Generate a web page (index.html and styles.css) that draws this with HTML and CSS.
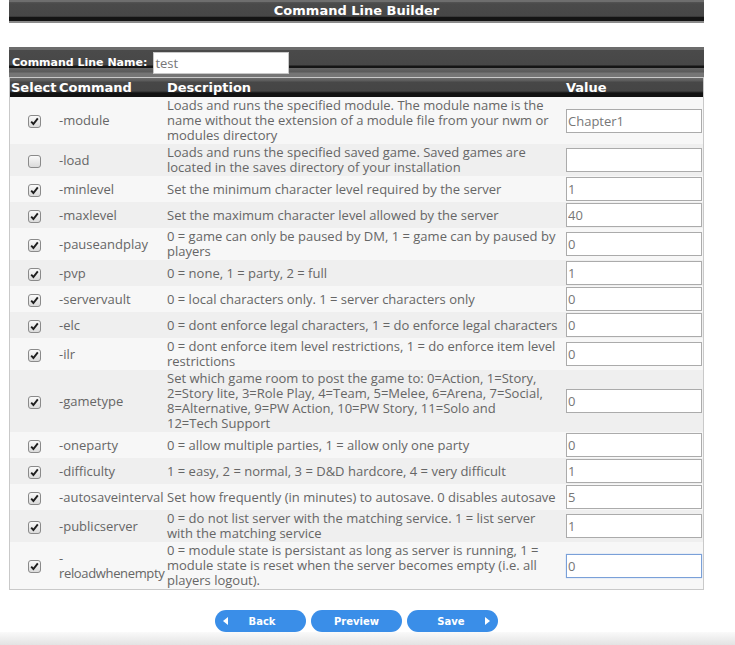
FILE: index.html
```html
<!DOCTYPE html>
<html>
<head>
<meta charset="utf-8">
<title>Command Line Builder</title>
<link rel="stylesheet" href="styles.css">
</head>
<body>
<div class="page">
  <div class="titlebar">Command Line Builder</div>
  <div class="namebar">
    <span class="namelabel">Command Line Name:</span>
    <input class="nameinput" type="text" value="test">
  </div>
  <div class="tablebox">
    <table class="grid">
      <colgroup>
        <col class="c-sel"><col class="c-cmd"><col class="c-desc"><col class="c-val">
      </colgroup>
      <thead>
        <tr><th class="h-sel">Select</th><th class="h-cmd">Command</th><th class="h-desc">Description</th><th class="h-val">Value</th></tr>
      </thead>
      <tbody>
        <tr><td class="sel"><span class="cb"><svg viewBox="0 0 13 13" width="13" height="13"><defs><linearGradient id="g" x1="0" y1="0" x2="0" y2="1"><stop offset="0" stop-color="#fbfbfb"/><stop offset="1" stop-color="#d9d9d9"/></linearGradient></defs><rect x="0.5" y="0.5" width="12" height="12" rx="2.5" fill="url(#g)" stroke="#8a8a8a"/><path d="M3.2 6.6 L5.4 9 L9.8 3.4" fill="none" stroke="#1e1e1e" stroke-width="1.9"/></svg></span></td><td class="cmd">-module</td><td class="desc">Loads and runs the specified module. The module name is the name without the extension of a module file from your nwm or modules directory</td><td class="val"><input type="text" value="Chapter1"></td></tr>
        <tr><td class="sel"><span class="cb"><svg viewBox="0 0 13 13" width="13" height="13"><rect x="0.5" y="0.5" width="12" height="12" rx="2.5" fill="url(#g)" stroke="#8a8a8a"/></svg></span></td><td class="cmd">-load</td><td class="desc">Loads and runs the specified saved game. Saved games are located in the saves directory of your installation</td><td class="val"><input type="text" value=""></td></tr>
        <tr><td class="sel"><span class="cb"><svg viewBox="0 0 13 13" width="13" height="13"><rect x="0.5" y="0.5" width="12" height="12" rx="2.5" fill="url(#g)" stroke="#8a8a8a"/><path d="M3.2 6.6 L5.4 9 L9.8 3.4" fill="none" stroke="#1e1e1e" stroke-width="1.9"/></svg></span></td><td class="cmd">-minlevel</td><td class="desc">Set the minimum character level required by the server</td><td class="val"><input type="text" value="1"></td></tr>
        <tr><td class="sel"><span class="cb"><svg viewBox="0 0 13 13" width="13" height="13"><rect x="0.5" y="0.5" width="12" height="12" rx="2.5" fill="url(#g)" stroke="#8a8a8a"/><path d="M3.2 6.6 L5.4 9 L9.8 3.4" fill="none" stroke="#1e1e1e" stroke-width="1.9"/></svg></span></td><td class="cmd">-maxlevel</td><td class="desc">Set the maximum character level allowed by the server</td><td class="val"><input type="text" value="40"></td></tr>
        <tr><td class="sel"><span class="cb"><svg viewBox="0 0 13 13" width="13" height="13"><rect x="0.5" y="0.5" width="12" height="12" rx="2.5" fill="url(#g)" stroke="#8a8a8a"/><path d="M3.2 6.6 L5.4 9 L9.8 3.4" fill="none" stroke="#1e1e1e" stroke-width="1.9"/></svg></span></td><td class="cmd">-pauseandplay</td><td class="desc">0 = game can only be paused by DM, 1 = game can by paused by players</td><td class="val"><input type="text" value="0"></td></tr>
        <tr><td class="sel"><span class="cb"><svg viewBox="0 0 13 13" width="13" height="13"><rect x="0.5" y="0.5" width="12" height="12" rx="2.5" fill="url(#g)" stroke="#8a8a8a"/><path d="M3.2 6.6 L5.4 9 L9.8 3.4" fill="none" stroke="#1e1e1e" stroke-width="1.9"/></svg></span></td><td class="cmd">-pvp</td><td class="desc">0 = none, 1 = party, 2 = full</td><td class="val"><input type="text" value="1"></td></tr>
        <tr><td class="sel"><span class="cb"><svg viewBox="0 0 13 13" width="13" height="13"><rect x="0.5" y="0.5" width="12" height="12" rx="2.5" fill="url(#g)" stroke="#8a8a8a"/><path d="M3.2 6.6 L5.4 9 L9.8 3.4" fill="none" stroke="#1e1e1e" stroke-width="1.9"/></svg></span></td><td class="cmd">-servervault</td><td class="desc">0 = local characters only. 1 = server characters only</td><td class="val"><input type="text" value="0"></td></tr>
        <tr><td class="sel"><span class="cb"><svg viewBox="0 0 13 13" width="13" height="13"><rect x="0.5" y="0.5" width="12" height="12" rx="2.5" fill="url(#g)" stroke="#8a8a8a"/><path d="M3.2 6.6 L5.4 9 L9.8 3.4" fill="none" stroke="#1e1e1e" stroke-width="1.9"/></svg></span></td><td class="cmd">-elc</td><td class="desc">0 = dont enforce legal characters, 1 = do enforce legal characters</td><td class="val"><input type="text" value="0"></td></tr>
        <tr><td class="sel"><span class="cb"><svg viewBox="0 0 13 13" width="13" height="13"><rect x="0.5" y="0.5" width="12" height="12" rx="2.5" fill="url(#g)" stroke="#8a8a8a"/><path d="M3.2 6.6 L5.4 9 L9.8 3.4" fill="none" stroke="#1e1e1e" stroke-width="1.9"/></svg></span></td><td class="cmd">-ilr</td><td class="desc">0 = dont enforce item level restrictions, 1 = do enforce item level restrictions</td><td class="val"><input type="text" value="0"></td></tr>
        <tr><td class="sel"><span class="cb"><svg viewBox="0 0 13 13" width="13" height="13"><rect x="0.5" y="0.5" width="12" height="12" rx="2.5" fill="url(#g)" stroke="#8a8a8a"/><path d="M3.2 6.6 L5.4 9 L9.8 3.4" fill="none" stroke="#1e1e1e" stroke-width="1.9"/></svg></span></td><td class="cmd">-gametype</td><td class="desc">Set which game room to post the game to: 0=Action, 1=Story, 2=Story lite, 3=Role Play, 4=Team, 5=Melee, 6=Arena, 7=Social, 8=Alternative, 9=PW Action, 10=PW Story, 11=Solo and 12=Tech&nbsp;Support</td><td class="val"><input type="text" value="0"></td></tr>
        <tr><td class="sel"><span class="cb"><svg viewBox="0 0 13 13" width="13" height="13"><rect x="0.5" y="0.5" width="12" height="12" rx="2.5" fill="url(#g)" stroke="#8a8a8a"/><path d="M3.2 6.6 L5.4 9 L9.8 3.4" fill="none" stroke="#1e1e1e" stroke-width="1.9"/></svg></span></td><td class="cmd">-oneparty</td><td class="desc">0 = allow multiple parties, 1 = allow only one party</td><td class="val"><input type="text" value="0"></td></tr>
        <tr><td class="sel"><span class="cb"><svg viewBox="0 0 13 13" width="13" height="13"><rect x="0.5" y="0.5" width="12" height="12" rx="2.5" fill="url(#g)" stroke="#8a8a8a"/><path d="M3.2 6.6 L5.4 9 L9.8 3.4" fill="none" stroke="#1e1e1e" stroke-width="1.9"/></svg></span></td><td class="cmd">-difficulty</td><td class="desc">1 = easy, 2 = normal, 3 = D&amp;D hardcore, 4 = very difficult</td><td class="val"><input type="text" value="1"></td></tr>
        <tr><td class="sel"><span class="cb"><svg viewBox="0 0 13 13" width="13" height="13"><rect x="0.5" y="0.5" width="12" height="12" rx="2.5" fill="url(#g)" stroke="#8a8a8a"/><path d="M3.2 6.6 L5.4 9 L9.8 3.4" fill="none" stroke="#1e1e1e" stroke-width="1.9"/></svg></span></td><td class="cmd">-autosaveinterval</td><td class="desc">Set how frequently (in minutes) to autosave. 0 disables autosave</td><td class="val"><input type="text" value="5"></td></tr>
        <tr><td class="sel"><span class="cb"><svg viewBox="0 0 13 13" width="13" height="13"><rect x="0.5" y="0.5" width="12" height="12" rx="2.5" fill="url(#g)" stroke="#8a8a8a"/><path d="M3.2 6.6 L5.4 9 L9.8 3.4" fill="none" stroke="#1e1e1e" stroke-width="1.9"/></svg></span></td><td class="cmd">-publicserver</td><td class="desc">0 = do not list server with the matching service. 1 = list server with the matching service</td><td class="val"><input type="text" value="1"></td></tr>
        <tr><td class="sel"><span class="cb"><svg viewBox="0 0 13 13" width="13" height="13"><rect x="0.5" y="0.5" width="12" height="12" rx="2.5" fill="url(#g)" stroke="#8a8a8a"/><path d="M3.2 6.6 L5.4 9 L9.8 3.4" fill="none" stroke="#1e1e1e" stroke-width="1.9"/></svg></span></td><td class="cmd cmd-tight">-reloadwhenempty</td><td class="desc">0 = module state is persistant as long as server is running, 1 = module state is reset when the server becomes empty (i.e. all players logout).</td><td class="val"><input class="focused" type="text" value="0"></td></tr>
      </tbody>
    </table>
  </div>
  <div class="buttons">
    <button class="btn btn-back"><svg class="tri" viewBox="0 0 5 8" width="5" height="8"><path d="M5 0 L0 4 L5 8 Z" fill="#fff"/></svg><span>Back</span></button>
    <button class="btn"><span>Preview</span></button>
    <button class="btn btn-save"><span>Save</span><svg class="tri" viewBox="0 0 5 8" width="5" height="8"><path d="M0 0 L5 4 L0 8 Z" fill="#fff"/></svg></button>
  </div>
</div>
<div class="footer"></div>
</body>
</html>
```
FILE: styles.css
```css
html, body {
  margin: 0;
  padding: 0;
  background: #fff;
}
body {
  font-family: "Open Sans", "Noto Sans", sans-serif;
  font-size: 13px;
  color: #666;
}
.page {
  width: 695px;
  padding-left: 9px;
}
.titlebar {
  height: 23px;
  line-height: 22px;
  text-align: center;
  color: #fff;
  font-family: "DejaVu Sans", sans-serif;
  font-weight: bold;
  font-size: 13px;
  background: linear-gradient(#6e6e6e 0, #6e6e6e 2px, #545454 2px, #4a4a4a 4px, #474747 16px, #2c2c2c 17px, #141414 17px, #141414 21px, #8a8a8a 21px, #8a8a8a 23px);
  margin-bottom: 24px;
}
.namebar {
  height: 30px;
  display: flex;
  align-items: center;
  padding-left: 3px;
  gap: 5px;
  background: linear-gradient(#6c6c6c 0, #6c6c6c 3px, #4a4a4a 3px, #474747 18px, #151515 19px, #151515 21px, #666 21px, #5a5a5a 25px, #767676 26px, #767676 30px);
}
.namelabel {
  color: #fff;
  font-family: "DejaVu Sans", sans-serif;
  font-weight: bold;
  font-size: 11px;
  margin-top: 1px;
  padding-right: 1px;
}
.nameinput {
  width: 136px;
  height: 22px;
  box-sizing: border-box;
  border: 1px solid #c8c8c8;
  padding: 0 1px;
  font-family: "Open Sans", sans-serif;
  font-size: 13px;
  color: #777;
  margin-top: 2px;
  outline: none;
}
.tablebox {
  border: 1px solid #c9c9c9;
}
.grid {
  width: 693px;
  table-layout: fixed;
  border-collapse: collapse;
  border-spacing: 0;
}
.c-sel { width: 47px; }
.c-cmd { width: 108px; }
.c-desc { width: 398px; }
.c-val { width: 140px; }
.grid th {
  height: 19px;
  padding: 0;
  text-align: left;
  color: #fff;
  font-family: "DejaVu Sans", sans-serif;
  font-weight: bold;
  font-size: 13px;
  line-height: 15px;
  background: linear-gradient(#6a6a6a 0, #5a5a5a 3px, #474747 4px, #454545 13px, #2a2a2a 14px, #121212 15px, #121212 19px);
}
.h-sel { padding-left: 1px !important; }
.h-cmd { padding-left: 2px !important; }
.h-desc { padding-left: 2px !important; }
.h-val { padding-left: 3px !important; }
.grid td {
  padding: 1px 0;
  line-height: 15px;
  vertical-align: middle;
}
.grid tbody tr:nth-child(odd) { background: #f7f7f7; }
.grid tbody tr:nth-child(even) { background: #efefef; }
.sel { text-align: center; }
.cb {
  display: inline-block;
  width: 13px;
  height: 13px;
  vertical-align: middle;
  margin-left: 2px;
}
.cb svg { display: block; }
.cmd { padding-left: 2px !important; }
.cmd-tight { letter-spacing: -0.35px; }
.desc { padding-left: 2px !important; padding-right: 2px !important; }
.val { padding-left: 3px !important; }
.val input {
  display: block;
  width: 136px;
  height: 24px;
  box-sizing: border-box;
  border: 1px solid #ababab;
  background: #fff;
  padding: 0 1px;
  font-family: "Open Sans", sans-serif;
  font-size: 13px;
  color: #777;
  outline: none;
}
.val input.focused {
  border-color: #7aa0d8;
  box-shadow: 0 0 1px #9cbcf0;
}
.buttons {
  display: flex;
  justify-content: center;
  gap: 5px;
  margin-top: 20px;
}
.btn {
  width: 91px;
  height: 22px;
  border: none;
  border-radius: 11px;
  background: #3a8ee8;
  color: #fff;
  font-family: "DejaVu Sans", sans-serif;
  font-weight: bold;
  font-size: 10px;
  padding: 0;
  display: flex;
  align-items: center;
  justify-content: center;
  position: relative;
}
.btn-back { padding-left: 3px; }
.btn-save { padding-right: 3px; }
.btn-back .tri { position: absolute; left: 8px; top: 7px; }
.btn-save .tri { position: absolute; right: 8px; top: 7px; }
.footer {
  height: 13px;
  background: linear-gradient(#fafafa, #e3e3e3);
}
```
